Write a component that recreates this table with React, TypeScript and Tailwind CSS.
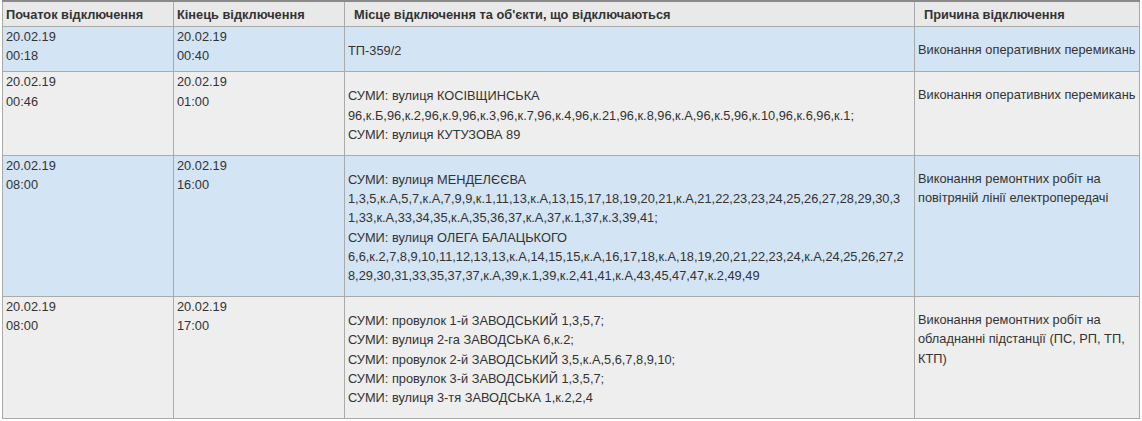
const rows = [
  {
    start: ["20.02.19", "00:18"],
    end: ["20.02.19", "00:40"],
    place: ["ТП-359/2"],
    reason: ["Виконання оперативних перемикань"],
    bg: "bg-[#d3e4f5]",
  },
  {
    start: ["20.02.19", "00:46"],
    end: ["20.02.19", "01:00"],
    place: [
      "СУМИ: вулиця КОСІВЩИНСЬКА",
      "96,к.Б,96,к.2,96,к.9,96,к.3,96,к.7,96,к.4,96,к.21,96,к.8,96,к.А,96,к.5,96,к.10,96,к.6,96,к.1;",
      "СУМИ: вулиця КУТУЗОВА 89",
    ],
    reason: ["Виконання оперативних перемикань"],
    bg: "bg-[#eeeeee]",
  },
  {
    start: ["20.02.19", "08:00"],
    end: ["20.02.19", "16:00"],
    place: [
      "СУМИ: вулиця МЕНДЕЛЄЄВА",
      "1,3,5,к.А,5,7,к.А,7,9,9,к.1,11,13,к.А,13,15,17,18,19,20,21,к.А,21,22,23,23,24,25,26,27,28,29,30,3",
      "1,33,к.А,33,34,35,к.А,35,36,37,к.А,37,к.1,37,к.3,39,41;",
      "СУМИ: вулиця ОЛЕГА БАЛАЦЬКОГО",
      "6,6,к.2,7,8,9,10,11,12,13,13,к.А,14,15,15,к.А,16,17,18,к.А,18,19,20,21,22,23,24,к.А,24,25,26,27,2",
      "8,29,30,31,33,35,37,37,к.А,39,к.1,39,к.2,41,41,к.А,43,45,47,47,к.2,49,49",
    ],
    reason: ["Виконання ремонтних робіт на", "повітряній лінії електропередачі"],
    bg: "bg-[#d3e4f5]",
  },
  {
    start: ["20.02.19", "08:00"],
    end: ["20.02.19", "17:00"],
    place: [
      "СУМИ: провулок 1-й ЗАВОДСЬКИЙ 1,3,5,7;",
      "СУМИ: вулиця 2-га ЗАВОДСЬКА 6,к.2;",
      "СУМИ: провулок 2-й ЗАВОДСЬКИЙ 3,5,к.А,5,6,7,8,9,10;",
      "СУМИ: провулок 3-й ЗАВОДСЬКИЙ 1,3,5,7;",
      "СУМИ: вулиця 3-тя ЗАВОДСЬКА 1,к.2,2,4",
    ],
    reason: ["Виконання ремонтних робіт на", "обладнанні підстанції (ПС, РП, ТП,", "КТП)"],
    bg: "bg-[#eeeeee]",
  },
];

const Lines = ({ lines }: { lines: string[] }) => (
  <>
    {lines.map((line, i) => (
      <div key={i} className="whitespace-nowrap">
        {line}
      </div>
    ))}
  </>
);

export default function App() {
  return (
    <div className="w-[1142px] h-[421px] overflow-hidden bg-white pl-[2px]">
      <table
        className="w-[1137px] border-collapse table-fixed text-[#333] text-[12.8px] leading-[19.2px]"
        style={{ fontFamily: '"Liberation Sans", Arial, sans-serif' }}
      >
        <colgroup>
          <col className="w-[171px]" />
          <col className="w-[171px]" />
          <col className="w-[570px]" />
          <col className="w-[225px]" />
        </colgroup>
        <thead>
          <tr className="bg-[#e9e9e9] border-t-2 border-t-[#8a8a8a] text-left font-bold">
            <th className="border border-[#aaa] border-t-[#8a8a8a] border-t-2 pl-[3px] pt-[3px] pb-[2px] font-bold">
              Початок відключення
            </th>
            <th className="border border-[#aaa] border-t-[#8a8a8a] border-t-2 pl-[3px] pt-[3px] pb-[2px] font-bold">
              Кінець відключення
            </th>
            <th className="border border-[#aaa] border-t-[#8a8a8a] border-t-2 pl-[9px] pt-[3px] pb-[2px] font-bold">
              Місце відключення та об'єкти, що відключаються
            </th>
            <th className="border border-[#aaa] border-t-[#8a8a8a] border-t-2 pl-[9px] pt-[3px] pb-[2px] font-bold">
              Причина відключення
            </th>
          </tr>
        </thead>
        <tbody>
          {rows.map((row, i) => (
            <tr key={i} className={row.bg}>
              <td className="border border-[#aaa] align-top px-[3px] pt-0">
                <Lines lines={row.start} />
              </td>
              <td className="border border-[#aaa] align-top px-[3px] pt-0">
                <Lines lines={row.end} />
              </td>
              <td className="border border-[#aaa] align-top px-[3px] pt-[14px] pb-[11px]">
                <Lines lines={row.place} />
              </td>
              <td className="border border-[#aaa] align-top px-[3px] pt-[13px]">
                <Lines lines={row.reason} />
              </td>
            </tr>
          ))}
        </tbody>
      </table>
    </div>
  );
}
